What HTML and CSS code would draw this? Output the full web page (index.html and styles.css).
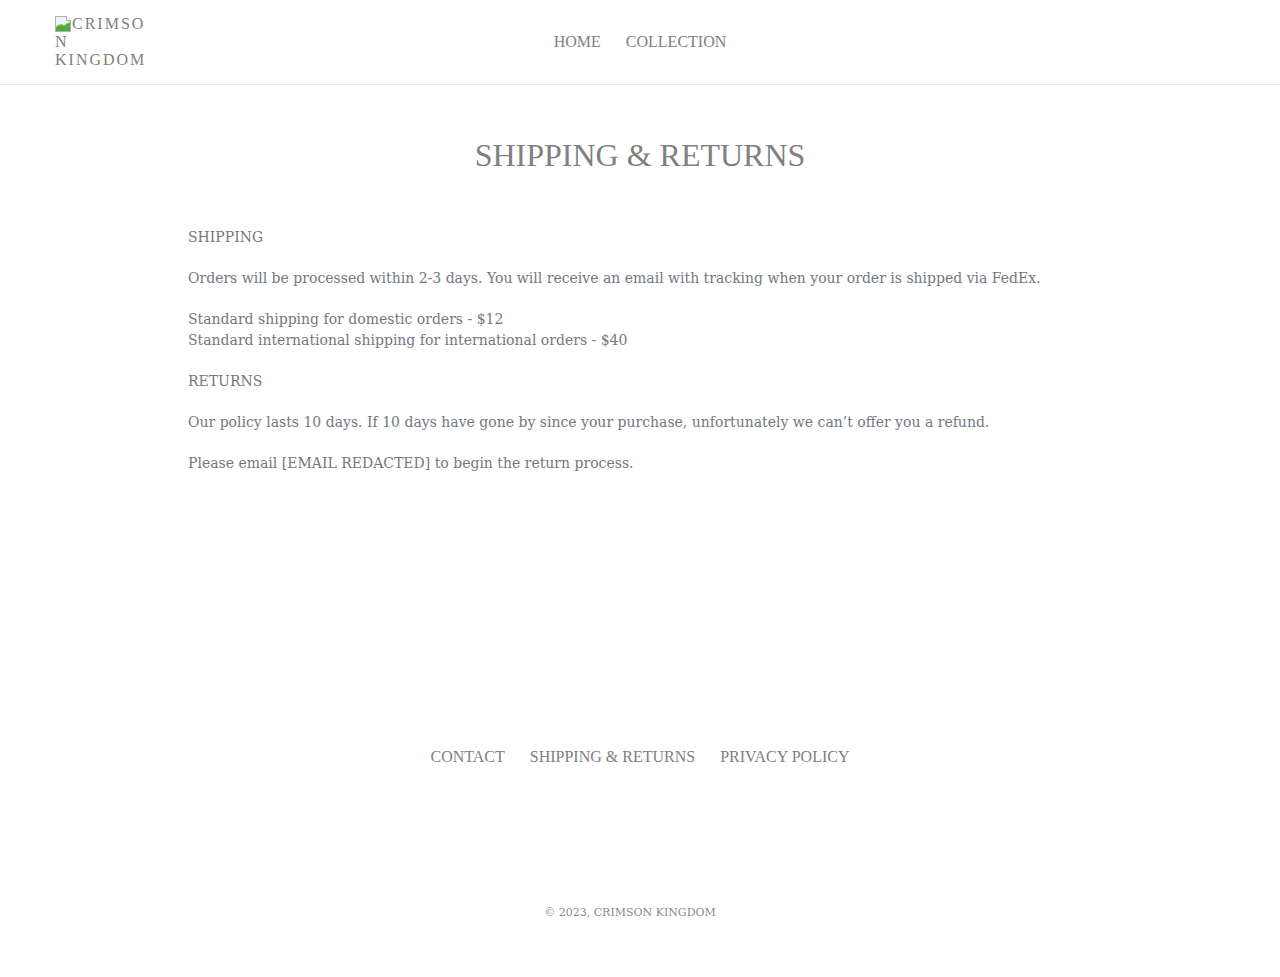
FILE: index.html
```html
<!DOCTYPE html>
<html lang="en">
<head>
<meta charset="utf-8">
<title>Shipping &amp; Returns – Crimson Kingdom</title>
<link rel="stylesheet" href="styles.css">
</head>
<body>
<header class="site-header">
  <div class="header-inner">
    <a class="logo" href="#">
      <span class="logo-alt"><svg class="broken" width="16" height="16" viewBox="0 0 16 16"><path d="M0.5 0.5h11l4 4v11h-15z" fill="#eef3f8" stroke="#a8b0ba"/><path d="M11.5 0.5v4h4" fill="#fff" stroke="#a8b0ba"/><path d="M1 15 L1 11 Q5 7 9 9.5 L15 6 V15 Z" fill="#5aa83c"/><path d="M1 11 Q5 7 9 9.5 L15 6" fill="none" stroke="#9ccf7a"/></svg>CRIMSON KINGDOM</span>
    </a>
    <nav class="main-nav">
      <a href="#">HOME</a>
      <a href="#">COLLECTION</a>
    </nav>
  </div>
</header>
<main class="page">
  <h1 class="page-title">SHIPPING &amp; RETURNS</h1>
  <div class="rte">
    <p>SHIPPING</p>
    <p>Orders will be processed within 2-3 days. You will receive an email with tracking when your order is shipped via FedEx.</p>
    <p>Standard shipping for domestic orders - $12<br>Standard international shipping for international orders - $40</p>
    <p>RETURNS</p>
    <p>Our policy lasts 10 days. If 10 days have gone by since your purchase, unfortunately we can’t offer you a refund.</p>
    <p>Please email [EMAIL REDACTED] to begin the return process.</p>
  </div>
</main>
<footer class="site-footer">
  <nav class="footer-nav">
    <a href="#">CONTACT</a>
    <a href="#">SHIPPING &amp; RETURNS</a>
    <a href="#">PRIVACY POLICY</a>
  </nav>
  <p class="copyright">© 2023, CRIMSON KINGDOM</p>
</footer>
</body>
</html>
```
FILE: styles.css
```css
* { box-sizing: border-box; }
html, body { margin: 0; padding: 0; background: #fff; }
body {
  font-family: "DejaVu Serif", serif;
  color: #737880;
}
a { text-decoration: none; color: inherit; }

.site-header {
  border-bottom: 1px solid #e8e8e8;
}
.header-inner {
  display: flex;
  align-items: center;
  height: 84px;
  padding: 0 55px;
}
.logo {
  width: 100px;
  flex: 0 0 auto;
}
.logo-alt {
  position: relative;
  display: block;
  width: 96px;
  text-indent: 17px;
  font-family: "Liberation Serif", serif;
  font-size: 16px;
  line-height: 18px;
  letter-spacing: 2px;
  color: #808080;
  overflow-wrap: anywhere;
}
.broken {
  position: absolute;
  left: 0;
  top: 1px;
}
.main-nav {
  flex: 1;
  display: flex;
  justify-content: center;
  gap: 25px;
  font-family: "Liberation Serif", serif;
  font-size: 16px;
  color: #808080;
  padding-right: 100px;
}

.page {
  width: 904px;
  margin: 0 auto;
  padding-top: 54px;
  min-height: 663px;
}
.page-title {
  text-align: center;
  font-family: "Liberation Serif", serif;
  font-weight: normal;
  font-size: 32px;
  line-height: 32px;
  color: #808080;
  margin: 0 0 56px;
}
.rte p {
  margin: 0 0 20px;
  font-size: 14px;
  line-height: 21px;
}

.site-footer {
  text-align: center;
  font-family: "Liberation Serif", serif;
}
.footer-nav {
  display: flex;
  justify-content: center;
  gap: 25px;
  font-size: 16px;
  color: #808080;
}
.copyright {
  margin: 140px 0 0;
  padding-right: 20px;
  font-family: "DejaVu Serif", serif;
  font-size: 11px;
  color: #8a8a8a;
  padding-bottom: 55px;
}
```
